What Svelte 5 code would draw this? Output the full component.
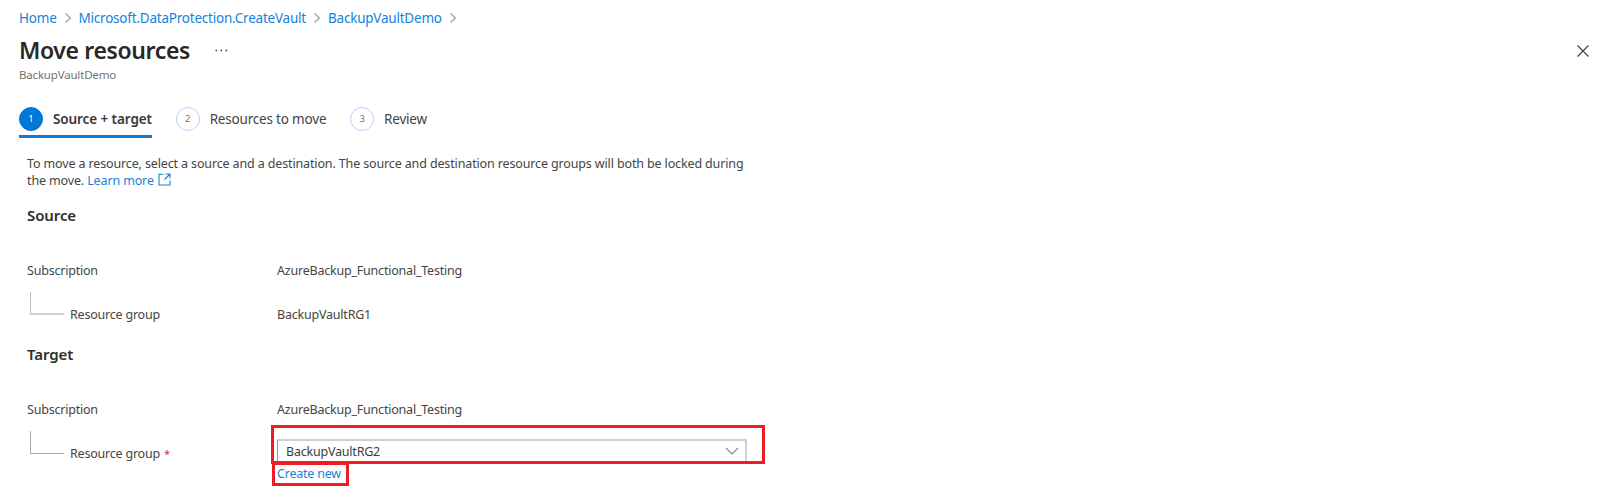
<script>
  const crumbs = ['Home', 'Microsoft.DataProtection.CreateVault', 'BackupVaultDemo'];
  const steps = ['Source + target', 'Resources to move', 'Review'];
</script>

<main>
  <nav class="crumbs">
    {#each crumbs as crumb}
      <a href="#top">{crumb}</a>
      <svg class="sep" viewBox="0 0 8 12"><path d="M1.5 1.5 L6.5 6 L1.5 10.5" /></svg>
    {/each}
  </nav>

  <header>
    <h1>Move resources</h1>
    <svg class="dots" viewBox="0 0 13 3"><circle cx="1.3" cy="1.5" r=".9" /><circle cx="6.3" cy="1.5" r=".9" /><circle cx="11.3" cy="1.5" r=".9" /></svg>
    <svg class="close" viewBox="0 0 12 12"><path d="M.5 .5 L11.5 11.5 M11.5 .5 L.5 11.5" /></svg>
  </header>
  <p class="subtitle">BackupVaultDemo</p>

  <div class="steps">
    {#each steps as step, i}
      <div class="step" class:active={i === 0}>
        <span class="num">{i + 1}</span>
        <span class="name">{step}</span>
      </div>
    {/each}
  </div>

  <div class="body">
    <p class="intro">
      To move a resource, select a source and a destination. The source and destination resource groups will both be locked during<br />the move. <a href="#learn">Learn more</a><svg class="ext" viewBox="0 0 13 13"><path d="M5.5 1.2 H1 V12 H12 V7.5 M7.5 1 H12 V5.5 M12 1 L6.5 6.5" /></svg>
    </p>

    <section>
      <h2>Source</h2>
      <div class="row"><span class="label">Subscription</span><span>AzureBackup_Functional_Testing</span></div>
      <div class="row child">
        <span class="label"><i class="branch"></i>Resource group</span><span>BackupVaultRG1</span>
      </div>
    </section>

    <section>
      <h2>Target</h2>
      <div class="row"><span class="label">Subscription</span><span>AzureBackup_Functional_Testing</span></div>
      <div class="row child">
        <span class="label"><i class="branch dark"></i>Resource group<em>*</em></span>
        <div class="field">
          <div class="outline">
            <div class="select">
              <span>BackupVaultRG2</span>
              <svg class="chev" viewBox="0 0 14 8"><path d="M1 1 L7 7 L13 1" /></svg>
            </div>
          </div>
          <a class="create" href="#new">Create new</a>
        </div>
      </div>
    </section>
  </div>
</main>

<style>
  :global(body) { background: #fff; overflow: hidden; }
  main {
    box-sizing: border-box;
    width: 1605px;
    height: 492px;
    overflow: hidden;
    padding: 7px 16px 0 19px;
    font: 12.5px/17px "Noto Sans", "Open Sans", sans-serif;
    letter-spacing: -0.135px;
    color: #444;
  }
  a { color: #1583da; text-decoration: none; }
  h1, h2, p { margin: 0; }
  svg { fill: none; display: block; flex: none; }

  .crumbs { display: flex; align-items: center; height: 23px; font-size: 13.5px; letter-spacing: -0.22px; }
  .sep { width: 8px; height: 12px; margin: -1px 6.5px 0 7.5px; stroke: #999; stroke-width: 1.1; }

  header { display: flex; align-items: center; height: 41px; }
  h1 { font-size: 23px; line-height: 41px; font-weight: 600; letter-spacing: -0.37px; color: #292827; }
  .dots { width: 13px; height: 3px; margin-left: 25.5px; fill: #555; }
  .close { width: 12px; height: 12px; margin-left: auto; stroke: #444; stroke-width: 1.2; }
  .subtitle { font-size: 11.5px; line-height: 16px; height: 16px; margin-top: -4px; letter-spacing: -0.18px; color: #747372; }

  .steps { display: flex; gap: 23.7px; height: 33px; margin-top: 21px; }
  .step { display: flex; align-items: center; gap: 10px; height: 29px; padding-bottom: 2px; font-size: 13.5px; letter-spacing: -0.19px; border-bottom: 3px solid transparent; }
  .num { box-sizing: border-box; width: 24px; height: 24px; border: 1px solid #b5d3fb; border-radius: 50%; font-size: 9.5px; line-height: 22px; text-align: center; color: #777; }
  .name { padding-top: 1px; }
  .active { font-weight: 600; letter-spacing: -0.09px; color: #383736; border-color: #0f7ad7; }
  .active .num { background: #0078d7; border-color: #0078d7; color: #fff; font-weight: 400; }

  .body { padding-left: 8px; }
  .intro { height: 34px; margin-top: 18px; line-height: 17px; white-space: nowrap; }
  .ext { display: inline-block; width: 13px; height: 13px; margin-left: 4px; vertical-align: -1px; stroke: #1583da; stroke-width: 1.1; }
  h2 { height: 20px; font-size: 15px; line-height: 20px; font-weight: 600; letter-spacing: -0.1px; color: #2e2d2c; }
  section { height: 138.5px; padding-top: 16px; box-sizing: border-box; }
  .row { display: flex; align-items: flex-start; height: 17px; margin-top: 37px; letter-spacing: -0.21px; }
  .row.child { margin-top: 26.5px; }
  section + section .row.child { margin-top: 27.5px; }
  .label { display: flex; width: 250px; flex: none; }
  .branch { box-sizing: border-box; width: 34px; height: 23px; margin: -14px 6px 0 3px; border: solid #d0d0d0; border-width: 0 0 2px 1px; }
  .branch { border-left-color: #bbb; }
  .dark { border-width: 0 0 1px 1px; border-color: #aaa; }
  em { margin-left: 4px; font-size: 11px; font-style: normal; color: #c9343c; }
  .field { margin: -20px 0 0 -6px; }
  .outline { box-sizing: border-box; width: 494px; height: 39px; border: 3px solid #ee1c25; padding: 11px 15px 0 3px; }
  .select { display: flex; align-items: center; justify-content: space-between; box-sizing: border-box; height: 22px; border: solid #d0d0d0; border-width: 2px 2px 0 1px; border-left-color: #999; padding: 0 6px 0 8px; color: #3d3d3d; }
  .chev { width: 14px; height: 8px; stroke: #888; stroke-width: 1.2; }
  .create { display: block; box-sizing: border-box; width: 77px; height: 24px; margin: -2px 0 0 1px; border: 3px solid #ee1c25; padding-left: 2px; line-height: 18px; }
</style>
